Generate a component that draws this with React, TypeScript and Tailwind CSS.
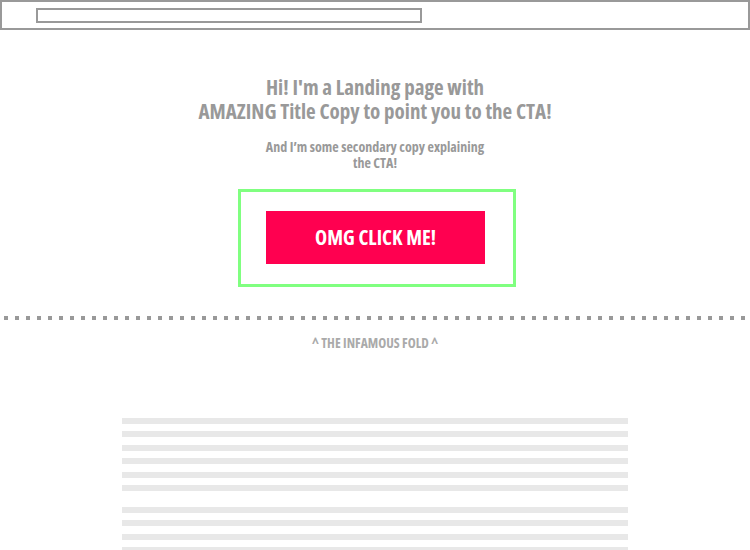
export default function App() {
  const group1 = [0, 1, 2, 3, 4, 5];
  const group2 = [0, 1, 2, 3];

  return (
    <div
      className="w-[750px] h-[550px] overflow-hidden bg-white font-bold"
      style={{ fontFamily: '"Open Sans", "Noto Sans", sans-serif' }}
    >
      <div className="h-[30px] border-2 border-[#999]">
        <div className="ml-[34px] mt-[6px] w-[386px] h-[15px] border-2 border-[#999]" />
      </div>

      <h1 className="mt-[45px] text-center text-[21px] leading-[24px] text-[#999] font-stretch-condensed">
        Hi! I'm a Landing page with
        <br />
        AMAZING Title Copy to point you to the CTA!
      </h1>

      <p className="mt-[16px] text-center text-[14px] leading-[16px] text-[#999] font-stretch-condensed">
        And I’m some secondary copy explaining
        <br />
        the CTA!
      </p>

      <div className="mt-[18px] ml-[238px] w-[278px] h-[98px] border-[3px] border-[#80ff80]">
        <button className="mt-[19px] ml-[25px] w-[219px] h-[53px] bg-[#ff0050] text-white text-[20.5px] font-bold font-stretch-condensed">
          OMG CLICK ME!
        </button>
      </div>

      <div className="mt-[29px] ml-[4px] h-[4px] bg-[repeating-linear-gradient(to_right,#999_0_4px,transparent_4px_11px)]" />

      <div className="mt-[15px] text-center text-[13.5px] leading-[16px] text-[#aaa] font-stretch-condensed">
        ^ THE INFAMOUS FOLD ^
      </div>

      <div className="mt-[67px] mx-auto w-[506px] flex flex-col gap-[7.4px]">
        {group1.map((i) => (
          <div key={i} className="h-[6px] bg-[#e8e8e8]" />
        ))}
      </div>
      <div className="mt-[16px] mx-auto w-[506px] flex flex-col gap-[7.4px]">
        {group2.map((i) => (
          <div key={i} className="h-[6px] bg-[#e8e8e8]" />
        ))}
      </div>
    </div>
  );
}
